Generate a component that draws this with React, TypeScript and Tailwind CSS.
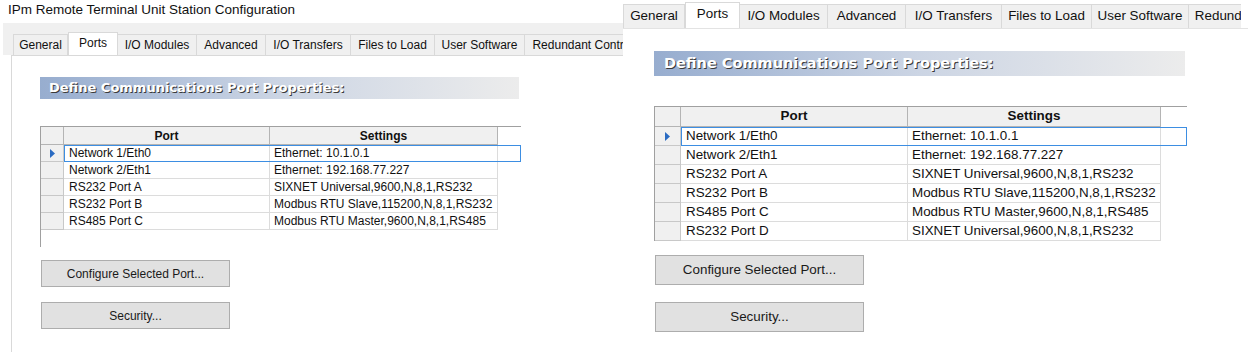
const ports: [string, string][] = [
  ["Network 1/Eth0", "Ethernet: 10.1.0.1"],
  ["Network 2/Eth1", "Ethernet: 192.168.77.227"],
  ["RS232 Port A", "SIXNET Universal,9600,N,8,1,RS232"],
  ["RS232 Port B", "Modbus RTU Slave,115200,N,8,1,RS232"],
  ["RS485 Port C", "Modbus RTU Master,9600,N,8,1,RS485"],
  ["RS232 Port D", "SIXNET Universal,9600,N,8,1,RS232"],
];

const tabs = ["General", "Ports", "I/O Modules", "Advanced", "I/O Transfers", "Files to Load", "User Software", "Redundant Controller"];

// class sets for the two captures (right one is the same dialog, bigger)
const small = {
  font: "text-[12px]",
  tabW: ["w-[55px]", "w-[50px]", "w-[79px]", "w-[69px]", "w-[85px]", "w-[84px]", "w-[90px]", "w-[130px]"],
  tabH: "h-[21px]",
  tabSelH: "h-[24px]",
  bar: "ml-[28px] mt-[21px] w-[479px] h-[22px] pl-[9px] text-[13px]",
  gridBox: "ml-[28px] mt-[27px] w-[481px] h-[121px]",
  headH: "h-[18px]",
  rowH: "h-[17px]",
  rh: "w-[23px]",
  port: "w-[206px]",
  set: "w-[228px]",
  btn: "ml-[29px] w-[189px] h-[27px] text-[12px]",
  btnGap: "mt-[13px]",
  btnGap2: "mt-[15px]",
  rows: 5,
};

const big = {
  font: "text-[13.4px]",
  tabW: ["w-[62px]", "w-[55px]", "w-[88px]", "w-[78px]", "w-[96px]", "w-[90px]", "w-[97px]", "w-[140px]"],
  tabH: "h-[24px]",
  tabSelH: "h-[27px]",
  bar: "ml-[31px] mt-[22px] w-[531px] h-[25px] pl-[10px] text-[14.5px]",
  gridBox: "ml-[31px] mt-[30px] w-[533px]",
  headH: "h-[20px]",
  rowH: "h-[19px]",
  rh: "w-[26px]",
  port: "w-[227px]",
  set: "w-[253px]",
  btn: "ml-[32px] w-[209px] h-[30px] text-[13.4px]",
  btnGap: "mt-[14px]",
  btnGap2: "mt-[17px]",
  rows: 6,
};

type S = typeof small;

function Tabs({ s }: { s: S }) {
  return (
    <div className="flex items-end">
      {tabs.map((t, i) => {
        const sel = t === "Ports";
        return (
          <div
            key={t}
            className={`${s.tabW[i]} shrink-0 flex items-center justify-center whitespace-nowrap border-t border-r border-[#d9d9d9] ${
              i === 0 ? "border-l" : ""
            } ${sel ? `${s.tabSelH} bg-white -mb-px relative z-10 border-l pb-[3px]` : `${s.tabH} bg-[#f0f0f0]`}`}
          >
            {t}
          </div>
        );
      })}
    </div>
  );
}

function Bar({ s }: { s: S }) {
  return (
    <div
      className={`${s.bar} flex items-center bg-gradient-to-r from-[#97adcf] via-[#ccd5e4] to-[#ececec] font-['DejaVu_Sans',sans-serif] font-bold text-white [text-shadow:1px_1px_0_#3a3a3a] whitespace-nowrap`}
    >
      Define Communications Port Properties:
    </div>
  );
}

function Grid({ s }: { s: S }) {
  return (
    <div className={`${s.gridBox} bg-white border-l border-t border-[#a0a0a0]`}>
      <div className={`flex ${s.headH}`}>
        <div className={`${s.rh} shrink-0 bg-[#f0f0f0] border-r border-b border-[#b4b4b4]`} />
        <div className={`${s.port} shrink-0 bg-[#f0f0f0] border-r border-b border-[#b4b4b4] flex items-center justify-center font-bold`}>Port</div>
        <div className={`${s.set} shrink-0 bg-[#f0f0f0] border-r border-b border-[#b4b4b4] flex items-center justify-center font-bold`}>Settings</div>
      </div>
      {ports.slice(0, s.rows).map(([p, v], i) => {
        const sel = i === 0;
        return (
          <div key={p} className={`flex ${s.rowH}`}>
            <div className={`${s.rh} shrink-0 bg-[#f0f0f0] border-r border-b border-[#c8c8c8] flex items-center justify-center`}>
              {sel && (
                <svg width="5" height="9" viewBox="0 0 5 9">
                  <polygon points="0,0 5,4.5 0,9" fill="#2a6bc2" />
                </svg>
              )}
            </div>
            <div className={`flex flex-1 relative ${sel ? "outline outline-1 -outline-offset-1 outline-[#3d8ee2]" : ""}`}>
              <div className={`${s.port} shrink-0 border-r border-b border-[#dcdcdc] pl-[5px] flex items-center whitespace-nowrap`}>{p}</div>
              <div className={`${s.set} shrink-0 border-r border-b border-[#dcdcdc] pl-[4px] flex items-center whitespace-nowrap`}>{v}</div>
            </div>
          </div>
        );
      })}
    </div>
  );
}

function Buttons({ s }: { s: S }) {
  const cls = `${s.btn} flex items-center justify-center bg-[#e1e1e1] border border-[#adadad] text-[#1a1a1a]`;
  return (
    <>
      <div className={`${s.btnGap} ${cls}`}>Configure Selected Port...</div>
      <div className={`${s.btnGap2} ${cls}`}>Security...</div>
    </>
  );
}

export default function App() {
  return (
    <div className="w-[1248px] h-[352px] bg-white flex overflow-hidden font-['Liberation_Sans',Arial,sans-serif] text-[#111]">
      {/* left capture */}
      <div className={`w-[623px] shrink-0 flex flex-col ${small.font}`}>
        <div className="h-[23px] pl-[8px] text-[13.5px] leading-[20px] whitespace-nowrap">
          IPm Remote Terminal Unit Station Configuration
        </div>
        <div className="ml-[3px] h-[32px] bg-[#f0f0f0] flex items-end pl-[10px] overflow-hidden">
          <Tabs s={small} />
        </div>
        <div className="ml-[11px] flex-1 bg-white border-l border-t border-[#d9d9d9]">
          <Bar s={small} />
          <Grid s={small} />
          <Buttons s={small} />
        </div>
      </div>

      {/* right capture */}
      <div className={`w-[625px] shrink-0 flex flex-col ${big.font}`}>
        <div className="w-[618px] h-[28px] flex items-end overflow-hidden">
          <Tabs s={big} />
        </div>
        <div className="flex-1 border-t border-[#e3e3e3] bg-white">
          <Bar s={big} />
          <Grid s={big} />
          <Buttons s={big} />
        </div>
      </div>
    </div>
  );
}
